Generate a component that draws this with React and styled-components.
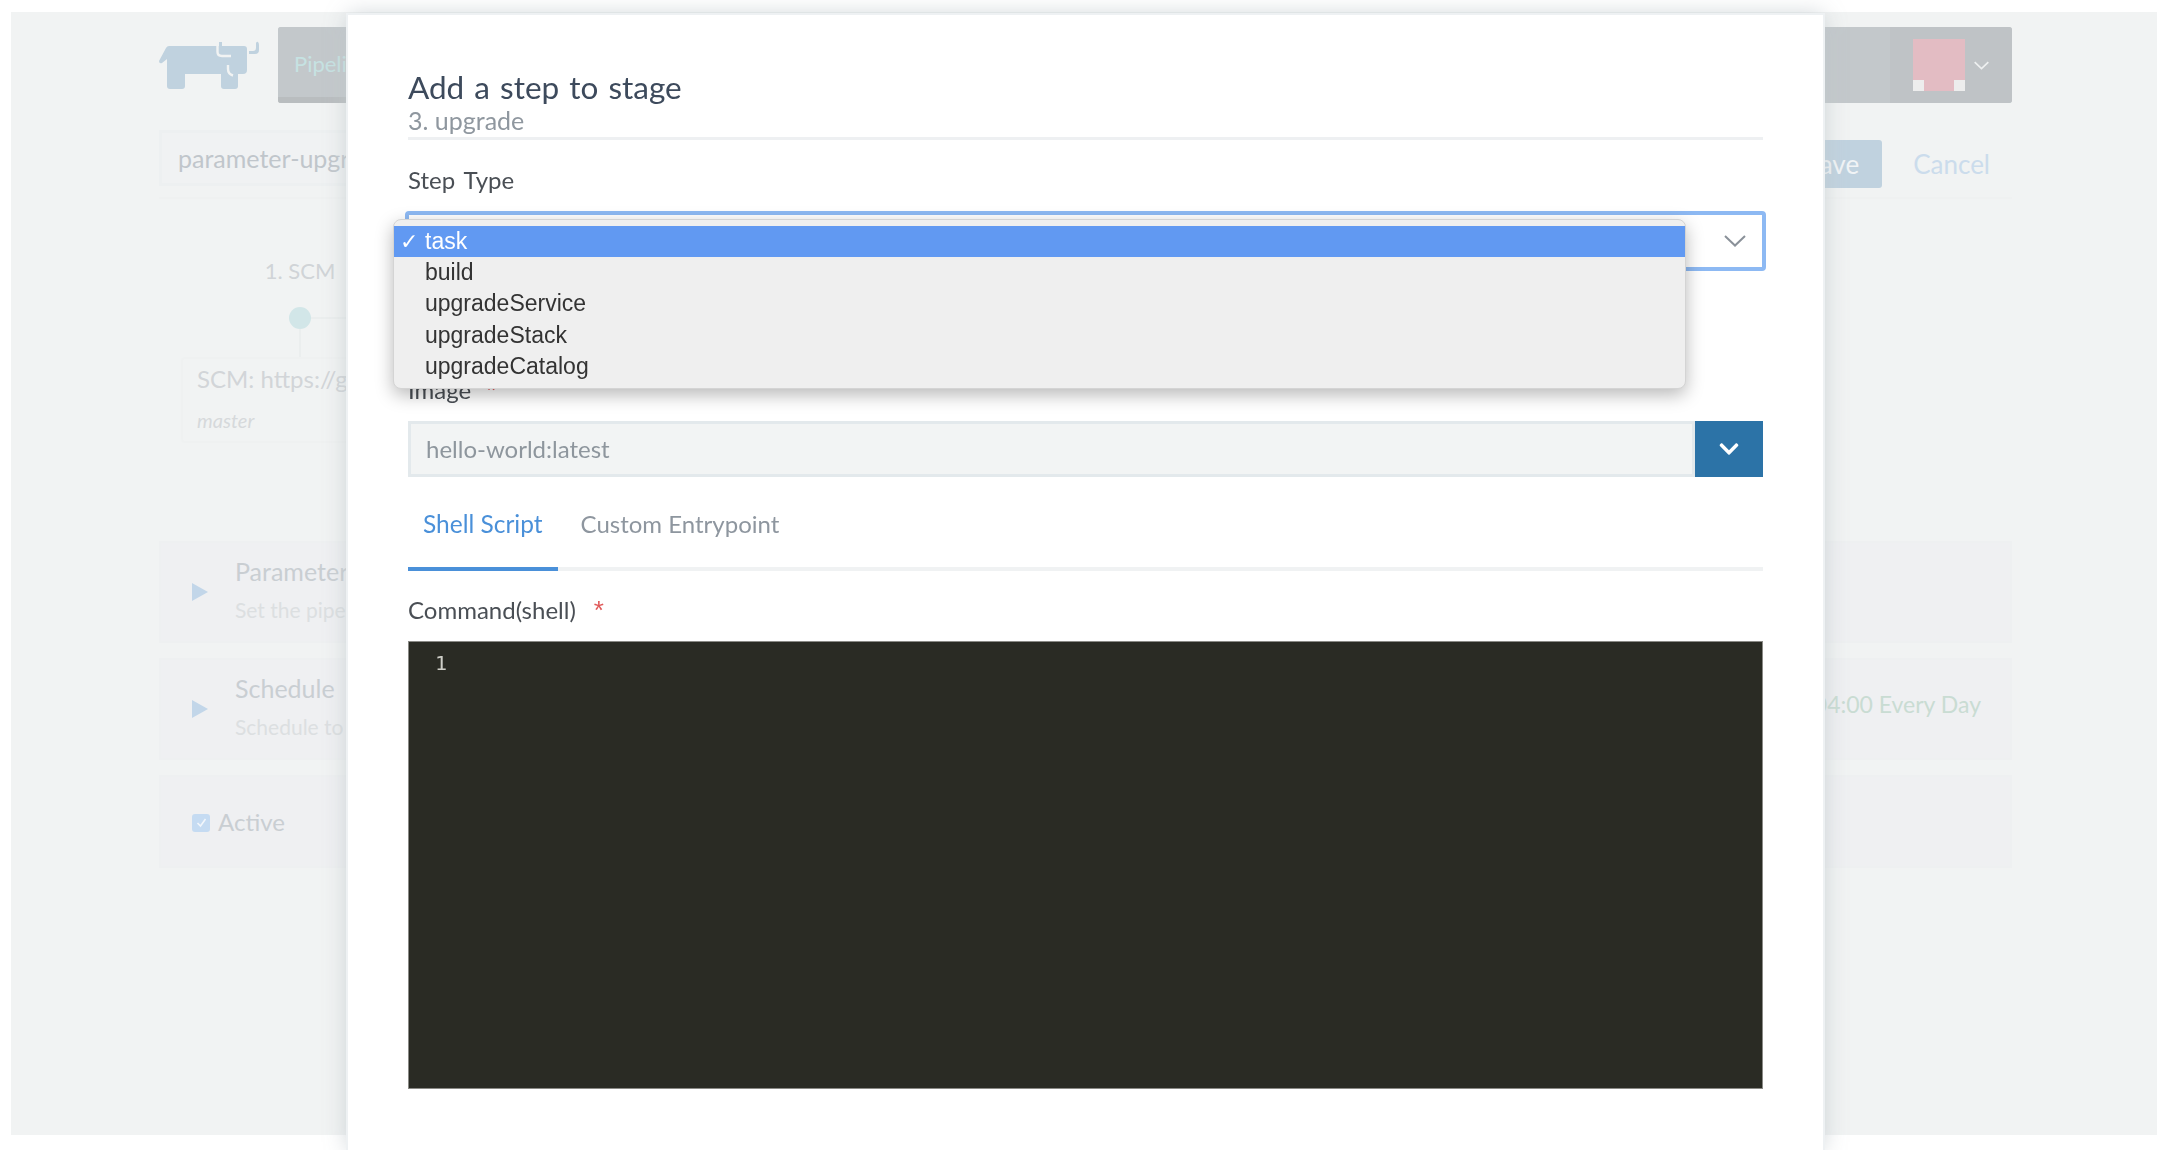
import React from "react";
import styled, { createGlobalStyle } from "styled-components";
import { FaChevronDown } from "react-icons/fa";

const GlobalStyle = createGlobalStyle`
  html, body {
    margin: 0;
    padding: 0;
    background: #fff;
    overflow: hidden;
  }
  body {
    font-family: "Lato", "Open Sans", sans-serif;
  }
  #root {
    height: 1150px;
  }
`;

const Screen = styled.div`
  position: relative;
  width: 2170px;
  height: 1150px;
  overflow: hidden;
  filter: blur(0.45px);
`;

const Page = styled.div`
  box-sizing: border-box;
  margin: 12px 13px 0 11px;
  height: 1123px;
  padding: 15px 145px 0 148px;
  background: #f1f3f3;
`;

const Header = styled.header`
  display: flex;
  align-items: center;
  gap: 19px;
  height: 76px;
`;

const NavBar = styled.nav`
  flex: 1;
  display: flex;
  justify-content: space-between;
  height: 76px;
  background: #c3c8cb;
  border-radius: 3px;
  overflow: hidden;
`;

const NavTab = styled.div`
  box-sizing: border-box;
  width: 130px;
  padding: 0 16px;
  line-height: 74px;
  font-size: 22px;
  color: #c6e2e2;
  background: #c3c8cb;
  border-bottom: 6px solid #b9bdbf;
`;

const UserMenu = styled.div`
  display: flex;
  align-items: center;
  gap: 9px;
  width: 122px;
  box-sizing: border-box;
  padding-left: 23px;
  background: #bfc3c6;
`;

const Avatar = styled.div`
  position: relative;
  width: 52px;
  height: 52px;
  background: #e3bcc3;
`;

const AvatarCorner = styled.span`
  position: absolute;
  bottom: 0;
  ${({ $side }) => $side}: 0;
  width: 11px;
  height: 11px;
  background: #ededed;
`;

const Toolbar = styled.div`
  display: flex;
  align-items: flex-start;
  height: 67px;
  margin-top: 27px;
  border-bottom: 2px solid #eff1f1;
`;

const NameField = styled.div`
  flex: 0 0 500px;
  box-sizing: border-box;
  height: 56px;
  padding: 0 16px;
  line-height: 50px;
  font-size: 25px;
  color: #c0c6cb;
  background: #f0f2f3;
  border: 3px solid #edf0f1;
`;

const ToolbarActions = styled.div`
  flex: 1;
  display: flex;
  justify-content: flex-end;
  align-items: center;
  height: 48px;
  margin-top: 10px;
  gap: 31px;
`;

const SaveButton = styled.div`
  width: 100px;
  height: 48px;
  line-height: 48px;
  text-align: right;
  padding-right: 23px;
  box-sizing: border-box;
  font-size: 26px;
  color: #f1f4f6;
  background: #c0d2df;
  border-radius: 3px;
`;

const CancelLink = styled.div`
  margin-right: 22px;
  font-size: 26px;
  color: #cbdcec;
`;

const Stage = styled.section`
  display: flex;
  flex-direction: column;
  height: 342px;
  padding-top: 57px;
  box-sizing: border-box;
`;

const StageTitle = styled.div`
  width: 100px;
  margin-left: 91px;
  text-align: center;
  font-size: 22px;
  line-height: 30px;
  color: #d0d4d7;
`;

const StageTrack = styled.div`
  display: flex;
  align-items: center;
  width: 280px;
  margin: 21px 0 0 130px;
`;

const StageDot = styled.span`
  flex: none;
  width: 22px;
  height: 22px;
  border-radius: 50%;
  background: #d2e6e8;
`;

const StageLine = styled.span`
  flex: 1;
  height: 2px;
  background: #ebeeee;
`;

const StageStem = styled.span`
  width: 2px;
  height: 28px;
  margin-left: 140px;
  background: #ebeeee;
`;

const StepCard = styled.div`
  box-sizing: border-box;
  width: 400px;
  height: 86px;
  margin-left: 22px;
  padding: 5px 14px;
  border: 2px solid #eff1f1;
  border-radius: 4px;
`;

const StepTitle = styled.div`
  font-size: 24px;
  line-height: 30px;
  color: #d2d5d8;
`;

const StepBranch = styled.div`
  margin-top: 14px;
  font-size: 20px;
  font-style: italic;
  color: #d6d9db;
`;

const Panels = styled.div`
  display: flex;
  flex-direction: column;
  gap: 15px;
`;

const Panel = styled.div`
  box-sizing: border-box;
  display: flex;
  align-items: center;
  height: ${({ $height }) => $height}px;
  padding: 0 32px 0 31px;
  background: #eff0f2;
  border: 2px solid #eef0f1;
`;

const Arrow = styled.span`
  width: 0;
  height: 0;
  margin-right: 27px;
  border-left: 16px solid #c2d6e9;
  border-top: 9px solid transparent;
  border-bottom: 9px solid transparent;
`;

const PanelText = styled.div`
  flex: 1;
  margin-top: -7px;
`;

const PanelTitle = styled.div`
  font-size: 25px;
  line-height: 30px;
  color: #c9ced2;
`;

const PanelHint = styled.div`
  margin-top: 12px;
  font-size: 21px;
  line-height: 24px;
  color: #dcdfe1;
`;

const PanelValue = styled.div`
  margin-right: -3px;
  margin-top: -10px;
  font-size: 23px;
  color: #c9dcd3;
`;

const ActiveBox = styled.span`
  display: flex;
  align-items: center;
  justify-content: center;
  width: 18px;
  height: 18px;
  margin: 2px 8px 0 0;
  border-radius: 3px;
  background: #c5dbf2;
`;

const ActiveLabel = styled.span`
  margin-top: -1px;
  font-size: 24px;
  color: #c9ced2;
`;

const Modal = styled.div`
  position: absolute;
  top: 15px;
  left: 348px;
  bottom: 0;
  width: 1475px;
  box-sizing: border-box;
  padding: 0 60px;
  background: #fff;
  box-shadow: 0 0 0 2px #eef1f3, 0 0 22px rgba(190, 198, 203, 0.8);
`;

const ModalHead = styled.div`
  padding-top: 54px;
  height: 125px;
  box-sizing: border-box;
  border-bottom: 3px solid #eef0f2;
`;

const ModalTitle = styled.h2`
  margin: 0;
  font-size: 31.5px;
  line-height: 36px;
  font-weight: 400;
  word-spacing: 2px;
  color: #3d4a5c;
`;

const ModalSubtitle = styled.div`
  font-size: 25px;
  line-height: 30px;
  color: #8f979f;
`;

const FieldLabel = styled.label`
  display: block;
  font-size: 24px;
  line-height: 30px;
  word-spacing: 3px;
  color: #4a4f55;
`;

const StepTypeLabel = styled(FieldLabel)`
  margin-top: 25px;
`;

const SelectWrap = styled.div`
  position: relative;
  margin-top: 16px;
`;

const SelectBox = styled.div`
  display: flex;
  justify-content: flex-end;
  align-items: center;
  box-sizing: border-box;
  height: 60px;
  margin: 0 -3px;
  padding-right: 16px;
  background: #fff;
  border: 4px solid #8db9f3;
  border-radius: 4px;
`;

const OptionList = styled.ul`
  position: absolute;
  top: 8px;
  left: -15px;
  width: 1293px;
  box-sizing: border-box;
  margin: 0;
  padding: 6px 0 6px;
  list-style: none;
  font-family: "Liberation Sans", Arial, sans-serif;
  font-size: 23px;
  background: #efefef;
  border: 1px solid #d4d4d4;
  border-radius: 8px;
  box-shadow: 0 6px 18px rgba(0, 0, 0, 0.28);
`;

const Option = styled.li`
  display: flex;
  height: 31.2px;
  line-height: 31.2px;
  padding-left: 6px;
  color: ${({ $selected }) => ($selected ? "#fff" : "#333")};
  background: ${({ $selected }) => ($selected ? "#6199f2" : "transparent")};
`;

const OptionCheck = styled.span`
  flex: none;
  width: 25px;
  font-size: 22px;
  font-weight: 700;
  font-family: "DejaVu Sans", sans-serif;
`;

const ImageLabel = styled(FieldLabel)`
  margin-top: 104px;
`;

const Required = styled.span`
  margin-left: ${({ $gap }) => $gap}px;
  font-family: "Liberation Sans", Arial, sans-serif;
  font-size: 26px;
  color: #e05a5a;
`;

const ImageRow = styled.div`
  display: flex;
  height: 56px;
  margin-top: 16px;
`;

const ImageInput = styled.div`
  flex: 1;
  box-sizing: border-box;
  padding: 0 15px;
  line-height: 50px;
  font-size: 24px;
  color: #8e969d;
  background: #f2f4f4;
  border: 3px solid #e3e9ec;
`;

const ImageButton = styled.div`
  display: flex;
  align-items: center;
  justify-content: center;
  width: 68px;
  background: #2c73a7;
  color: #fff;
`;

const Tabs = styled.div`
  display: flex;
  height: 94px;
  box-sizing: border-box;
  border-bottom: 4px solid #f0f2f3;
`;

const Tab = styled.div`
  box-sizing: border-box;
  height: 94px;
  padding: 29px 15px 0;
  margin-right: ${({ $active }) => ($active ? "8px" : "0")};
  font-size: ${({ $active }) => ($active ? "24.5px" : "24px")};
  line-height: 36px;
  color: ${({ $active }) => ($active ? "#4a90d9" : "#8e969f")};
  border-bottom: 4px solid ${({ $active }) => ($active ? "#4a90d9" : "transparent")};
`;

const CommandLabel = styled(FieldLabel)`
  margin-top: 24px;
`;

const Editor = styled.div`
  box-sizing: border-box;
  height: 448px;
  margin-top: 16px;
  padding: 9px 0 0 26px;
  font-family: "DejaVu Sans Mono", "Liberation Mono", monospace;
  font-size: 20px;
  line-height: 24px;
  color: #cfcfc8;
  background: #2a2b24;
  border: 1px solid #8a8a86;
`;

const LogoMark = styled.svg`
  flex: none;
`;

const RancherLogo = () => (
  <LogoMark width="100" height="48" viewBox="0 0 100 48">
    <path
      fill="#c0d2df"
      d="M0 20 L7 7 Q8 5 10 5 H60 V1 H63 V5 H85 Q88 5 88 8 V29 Q88 33 84 33 H79 V45 Q79 48 76 48 H65 Q62 48 62 45 V33 H26 V45 Q26 48 23 48 H11 Q8 48 8 45 V18 L3 22 Q0 23 0 20Z"
    />
    <path fill="none" stroke="#f1f3f3" strokeWidth="2.4" d="M58.5 2 V11 Q58.5 15 63 15 H72" />
    <path fill="none" stroke="#f1f3f3" strokeWidth="2.4" d="M69 24 V28 Q69 33 74 34.5" />
    <path fill="#c0d2df" d="M90 10 H94 Q97 10 97 7 V2 Q98 0 99 1 Q100 2 100 4 V9 Q100 13 96 13 H90Z" />
  </LogoMark>
);

const Chevron = ({ color, width, height, strokeWidth }) => (
  <svg width={width} height={height} viewBox="0 0 22 12">
    <path d="M1 1 L11 10.5 L21 1" fill="none" stroke={color} strokeWidth={strokeWidth} />
  </svg>
);

const stepTypes = ["task", "build", "upgradeService", "upgradeStack", "upgradeCatalog"];

const App = () => (
  <Screen>
    <GlobalStyle />
    <Page>
      <Header>
        <RancherLogo />
        <NavBar>
          <NavTab>Pipeli</NavTab>
          <UserMenu>
            <Avatar>
              <AvatarCorner $side="left" />
              <AvatarCorner $side="right" />
            </Avatar>
            <Chevron color="#eef0f0" width={15} height={9} strokeWidth={2.5} />
          </UserMenu>
        </NavBar>
      </Header>
      <Toolbar>
        <NameField>parameter-upgr</NameField>
        <ToolbarActions>
          <SaveButton>Save</SaveButton>
          <CancelLink>Cancel</CancelLink>
        </ToolbarActions>
      </Toolbar>
      <Stage>
        <StageTitle>1. SCM</StageTitle>
        <StageTrack>
          <StageDot />
          <StageLine />
        </StageTrack>
        <StageStem />
        <StepCard>
          <StepTitle>SCM: https://g</StepTitle>
          <StepBranch>master</StepBranch>
        </StepCard>
      </Stage>
      <Panels>
        <Panel $height={102}>
          <Arrow />
          <PanelText>
            <PanelTitle>Parameter</PanelTitle>
            <PanelHint>Set the pipel</PanelHint>
          </PanelText>
        </Panel>
        <Panel $height={102}>
          <Arrow />
          <PanelText>
            <PanelTitle>Schedule</PanelTitle>
            <PanelHint>Schedule to</PanelHint>
          </PanelText>
          <PanelValue>04:00 Every Day</PanelValue>
        </Panel>
        <Panel $height={93}>
          <ActiveBox>
            <svg width="13" height="13" viewBox="0 0 13 13">
              <path d="M2.5 7 L5.5 10 L10.5 3" fill="none" stroke="#f2f6fb" strokeWidth="1.6" />
            </svg>
          </ActiveBox>
          <ActiveLabel>Active</ActiveLabel>
        </Panel>
      </Panels>
    </Page>
    <Modal>
      <ModalHead>
        <ModalTitle>Add a step to stage</ModalTitle>
        <ModalSubtitle>3. upgrade</ModalSubtitle>
      </ModalHead>
      <StepTypeLabel>Step Type</StepTypeLabel>
      <SelectWrap>
        <SelectBox>
          <Chevron color="#8a9199" width={22} height={12} strokeWidth={2} />
        </SelectBox>
        <OptionList>
          {stepTypes.map((type, index) => (
            <Option key={type} $selected={index === 0}>
              <OptionCheck>{index === 0 ? "✓" : ""}</OptionCheck>
              {type}
            </Option>
          ))}
        </OptionList>
      </SelectWrap>
      <ImageLabel>
        Image<Required $gap={15}>*</Required>
      </ImageLabel>
      <ImageRow>
        <ImageInput>hello-world:latest</ImageInput>
        <ImageButton>
          <FaChevronDown size={22} />
        </ImageButton>
      </ImageRow>
      <Tabs>
        <Tab $active>Shell Script</Tab>
        <Tab>Custom Entrypoint</Tab>
      </Tabs>
      <CommandLabel>
        Command(shell)<Required $gap={18}>*</Required>
      </CommandLabel>
      <Editor>1</Editor>
    </Modal>
  </Screen>
);

export default App;
